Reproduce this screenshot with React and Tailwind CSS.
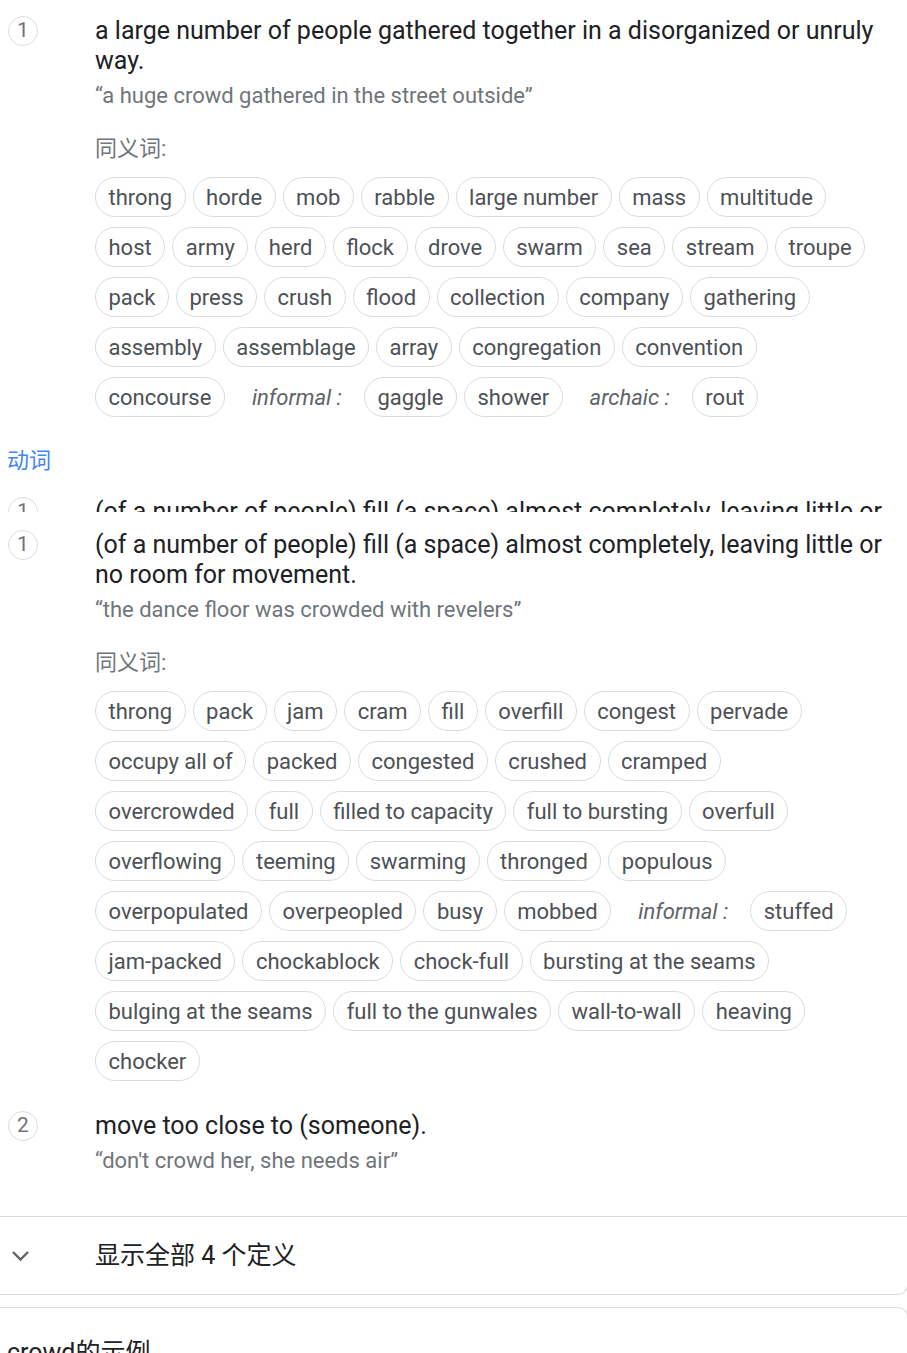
import React from 'react';

const FONT = { fontFamily: 'Roboto, "Noto Sans CJK SC", sans-serif' };

const nounRows = [
  ['throng', 'horde', 'mob', 'rabble', 'large number', 'mass', 'multitude'],
  ['host', 'army', 'herd', 'flock', 'drove', 'swarm', 'sea', 'stream', 'troupe'],
  ['pack', 'press', 'crush', 'flood', 'collection', 'company', 'gathering'],
  ['assembly', 'assemblage', 'array', 'congregation', 'convention'],
  ['concourse', '#informal', 'gaggle', 'shower', '#archaic', 'rout'],
];

const verbRows = [
  ['throng', 'pack', 'jam', 'cram', 'fill', 'overfill', 'congest', 'pervade'],
  ['occupy all of', 'packed', 'congested', 'crushed', 'cramped'],
  ['overcrowded', 'full', 'filled to capacity', 'full to bursting', 'overfull'],
  ['overflowing', 'teeming', 'swarming', 'thronged', 'populous'],
  ['overpopulated', 'overpeopled', 'busy', 'mobbed', '#informal', 'stuffed'],
  ['jam-packed', 'chockablock', 'chock-full', 'bursting at the seams'],
  ['bulging at the seams', 'full to the gunwales', 'wall-to-wall', 'heaving'],
  ['chocker'],
];

function Chip({ word }) {
  if (word.startsWith('#')) {
    return (
      <span className="shrink-0 pl-5 pr-[15px] mr-[7px] h-10 flex items-center text-[22px] italic text-[#5f6368] whitespace-nowrap">
        {word.slice(1)} :
      </span>
    );
  }
  return (
    <span className="shrink-0 h-10 px-[12.5px] mr-[7px] flex items-center rounded-full border border-[#dadce0] text-[22px] text-[#4d5156] whitespace-nowrap">
      {word}
    </span>
  );
}

function Sense({ num, def, example, rows }) {
  return (
    <div className="flex">
      <div className="w-[95px] shrink-0">
        <div className="ml-2 w-[30px] h-[30px] rounded-full border border-[#dadce0] flex items-center justify-center text-[21px] text-[#70757a]">
          {num}
        </div>
      </div>
      <div className="flex-1 pr-5">
        <div className="text-[25px] leading-[30px] text-[#202124]">{def}</div>
        <div className="mt-1.5 text-[22px] leading-[28px] text-[#70757a]">{example}</div>
        {rows && (
          <>
            <div className="mt-[25px] text-[22px] leading-[28px] text-[#70757a]">同义词:</div>
            <div className="mt-[14px]">
              {rows.map((row, i) => (
                <div key={i} className="flex mb-[10px]">
                  {row.map((w, j) => (
                    <Chip key={j} word={w} />
                  ))}
                </div>
              ))}
            </div>
          </>
        )}
      </div>
    </div>
  );
}

const verbDef = '(of a number of people) fill (a space) almost completely, leaving little or no room for movement.';

export default function App() {
  return (
    <div className="w-[907px] overflow-hidden bg-white" style={FONT}>
      <div className="-ml-4 w-[924px] pl-4 border-b border-r border-[#dadce0] rounded-br-[10px]">
        <div className="pt-4">
          <Sense
            num="1"
            def="a large number of people gathered together in a disorganized or unruly way."
            example="“a huge crowd gathered in the street outside”"
            rows={nounRows}
          />
        </div>

        <div className="mt-5 ml-[7px] text-[22px] leading-[28px] text-[#4285f4]">动词</div>

        <div className="mt-[22px] h-[15px] overflow-hidden">
          <Sense num="1" def={verbDef} example="“the dance floor was crowded with revelers”" />
        </div>

        <div className="mt-[18px]">
          <Sense num="1" def={verbDef} example="“the dance floor was crowded with revelers”" rows={verbRows} />
        </div>

        <div className="mt-5 pb-[41px]">
          <Sense num="2" def="move too close to (someone)." example="“don't crowd her, she needs air”" />
        </div>

        <div className="border-t border-[#dadce0] h-[78px] flex items-center">
          <div className="w-[95px] shrink-0 pl-[11px]">
            <svg width="19" height="12" viewBox="0 0 19 12" fill="none">
              <polyline points="2,2 9.5,9.5 17,2" stroke="#5f6368" strokeWidth="2.4" />
            </svg>
          </div>
          <div className="text-[25px] text-[#202124]">显示全部 4 个定义</div>
        </div>
      </div>

      <div className="mt-3 -ml-4 w-[924px] pl-4 border-t border-r border-[#dadce0] rounded-tr-[10px] h-[60px]">
        <div className="pt-[30px] pl-[7px] text-[25px] leading-[30px] text-[#202124]">crowd的示例</div>
      </div>
    </div>
  );
}
